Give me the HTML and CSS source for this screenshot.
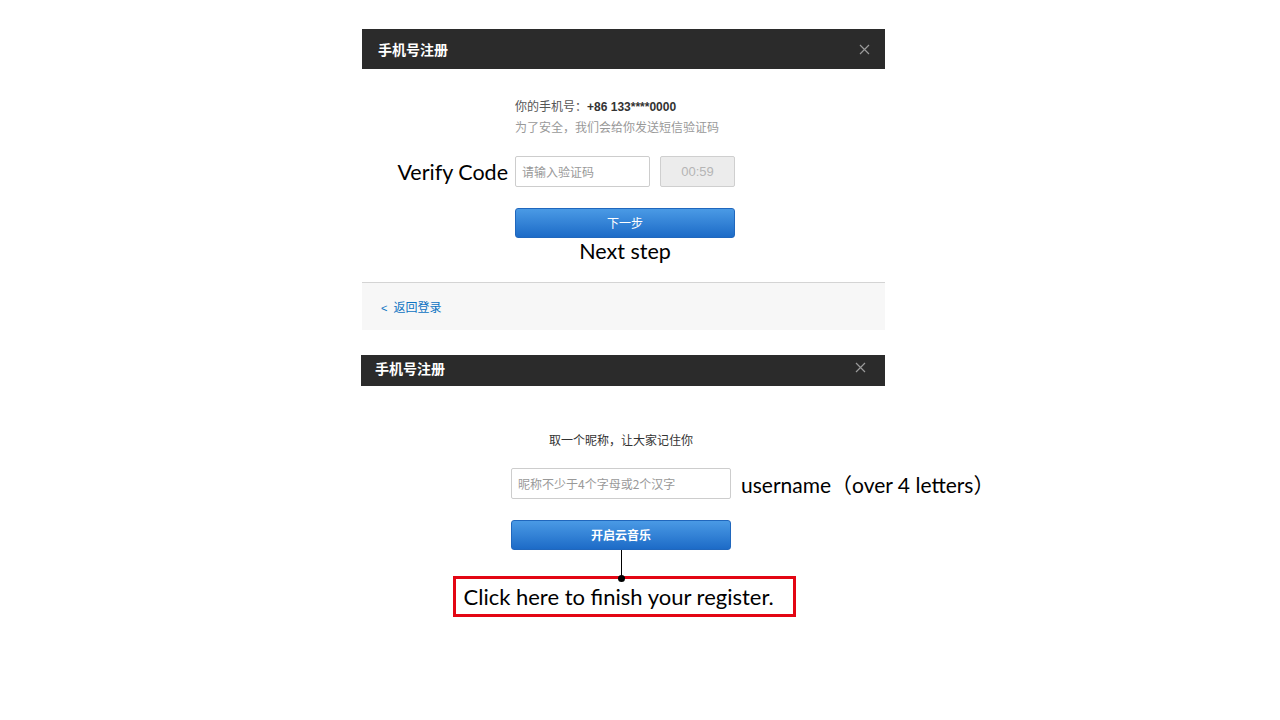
FILE: index.html
```html
<!DOCTYPE html>
<html>
<head>
    <title>手机号注册</title>
    <link rel="stylesheet" href="styles.css">
</head>
<body>
    <div class="panel panel-first">
        <div class="panel-head">
            <span class="panel-title">手机号注册</span>
            <svg class="close" width="11" height="11" viewBox="0 0 11 11"><path d="M1 1L10 10M10 1L1 10" stroke="#9a9a9a" stroke-width="1.2" fill="none"/></svg>
        </div>
        <div class="panel-body">
            <div class="row">
                <div class="info">
                    <p class="phone">你的手机号：<b>+86 133****0000</b></p>
                    <p class="hint">为了安全，我们会给你发送短信验证码</p>
                </div>
            </div>
            <div class="row row-field">
                <span class="note note-left">Verify Code</span>
                <div class="field-group">
                    <div class="input">请输入验证码</div>
                    <div class="timer">00:59</div>
                </div>
            </div>
            <div class="row row-btn">
                <div class="btn">下一步</div>
            </div>
            <div class="row">
                <span class="note note-center">Next step</span>
            </div>
        </div>
        <div class="panel-foot">
            <a class="back" href="#"><span class="arrow">&lt;</span>返回登录</a>
        </div>
    </div>

    <div class="panel panel-second">
        <div class="panel-head panel-head-small">
            <span class="panel-title">手机号注册</span>
            <svg class="close" width="11" height="11" viewBox="0 0 11 11"><path d="M1 1L10 10M10 1L1 10" stroke="#9a9a9a" stroke-width="1.2" fill="none"/></svg>
        </div>
        <div class="panel-body panel-body-second">
            <div class="row">
                <p class="prompt">取一个昵称，让大家记住你</p>
            </div>
            <div class="row row-field">
                <div class="input">昵称不少于4个字母或2个汉字</div>
                <span class="note note-right">username（over 4 letters）</span>
            </div>
            <div class="row row-btn">
                <div class="btn btn-bold">开启云音乐</div>
            </div>
            <div class="row">
                <div class="callout">
                    <div class="connector"></div>
                    <div class="callout-box">Click here to finish your register.</div>
                </div>
            </div>
        </div>
    </div>
</body>
</html>
```

FILE: styles.css
```css
body {
    margin: 0;
    background: #fff;
    font-family: "Liberation Sans", Arial, "Noto Sans CJK SC", sans-serif;
    font-size: 12px;
    color: #333;
}

p {
    margin: 0;
}

.panel {
    width: 523px;
    background: #fff;
}

.panel-first {
    margin: 29px 0 0 362px;
}

.panel-second {
    margin: 25px 0 0 361px;
    width: 524px;
}

.panel-head {
    height: 40px;
    background: #2b2b2b;
    display: flex;
    align-items: center;
    justify-content: space-between;
    padding: 0 15px 0 16px;
}

.panel-head-small {
    box-sizing: border-box;
    height: 31px;
    padding: 0 19px 6px 14px;
}

.panel-title {
    color: #fff;
    font-size: 14px;
    font-weight: bold;
    font-family: "Noto Sans CJK SC", sans-serif;
}

.close {
    display: block;
}

.panel-body {
    padding: 28px 0 18px;
}

.panel-body-second {
    padding: 44px 0 0;
}

.row {
    display: grid;
    grid-template-columns: 153px 220px 1fr;
}

.panel-body-second .row {
    grid-template-columns: 150px 220px 1fr;
}

.row > * {
    grid-column: 2;
}

.info {
    line-height: 21px;
}

.phone {
    color: #555;
}

.phone b {
    font-weight: bold;
    color: #333;
}

.hint {
    color: #999;
}

.row-field {
    margin-top: 17px;
    align-items: center;
}

.panel-body-second .row-field {
    margin-top: 18px;
}

.note {
    font-family: "Lato", "Noto Sans CJK SC", sans-serif;
    font-size: 21.5px;
    color: #000;
    white-space: nowrap;
}

.row > .note-left {
    grid-column: 1;
    text-align: right;
    padding-right: 7px;
}

.row > .note-right {
    grid-column: 3;
    padding-left: 10px;
    font-size: 21px;
}

.note-center {
    text-align: center;
    line-height: 26px;
}

.field-group {
    display: flex;
    gap: 10px;
}

.input {
    flex: 1;
    height: 29px;
    line-height: 29px;
    border: 1px solid #cdcdcd;
    border-radius: 2px;
    padding-left: 6px;
    color: #999;
    font-family: "Noto Sans CJK SC", sans-serif;
}

.timer {
    width: 73px;
    height: 29px;
    line-height: 29px;
    border: 1px solid #cfcfcf;
    border-radius: 2px;
    background: #ececec;
    color: #b5b5b5;
    text-align: center;
    font-size: 13px;
}

.row-btn {
    margin-top: 21px;
}

.btn {
    height: 28px;
    line-height: 28px;
    border: 1px solid #2067bd;
    border-radius: 3px;
    background: linear-gradient(#4a9ae5, #1d6bc7);
    color: #fff;
    text-align: center;
    font-family: "Noto Sans CJK SC", sans-serif;
}

.btn-bold {
    font-weight: bold;
}

.panel-foot {
    border-top: 1px solid #d4d4d4;
    background: #f7f7f7;
    height: 47px;
    display: flex;
    align-items: center;
    padding-left: 19px;
}

.back {
    color: #0c73c2;
    text-decoration: none;
    font-family: "Noto Sans CJK SC", sans-serif;
}

.arrow {
    font-family: "Liberation Sans", sans-serif;
    font-size: 11px;
    margin-right: 6px;
}

.prompt {
    text-align: center;
    line-height: 20px;
    font-family: "Noto Sans CJK SC", sans-serif;
}

.callout {
    display: flex;
    flex-direction: column;
    align-items: center;
}

.connector {
    position: relative;
    width: 1px;
    height: 26px;
    background: #000;
}

.connector::after {
    content: "";
    position: absolute;
    left: -3px;
    bottom: -6px;
    width: 7px;
    height: 7px;
    border-radius: 50%;
    background: #000;
    z-index: 1;
}

.callout-box {
    box-sizing: border-box;
    width: 343px;
    height: 41px;
    margin-left: 6px;
    border: 3px solid #e30613;
    padding-left: 8px;
    display: flex;
    align-items: center;
    font-family: "Lato", sans-serif;
    font-size: 22px;
    color: #000;
    white-space: nowrap;
}
```
